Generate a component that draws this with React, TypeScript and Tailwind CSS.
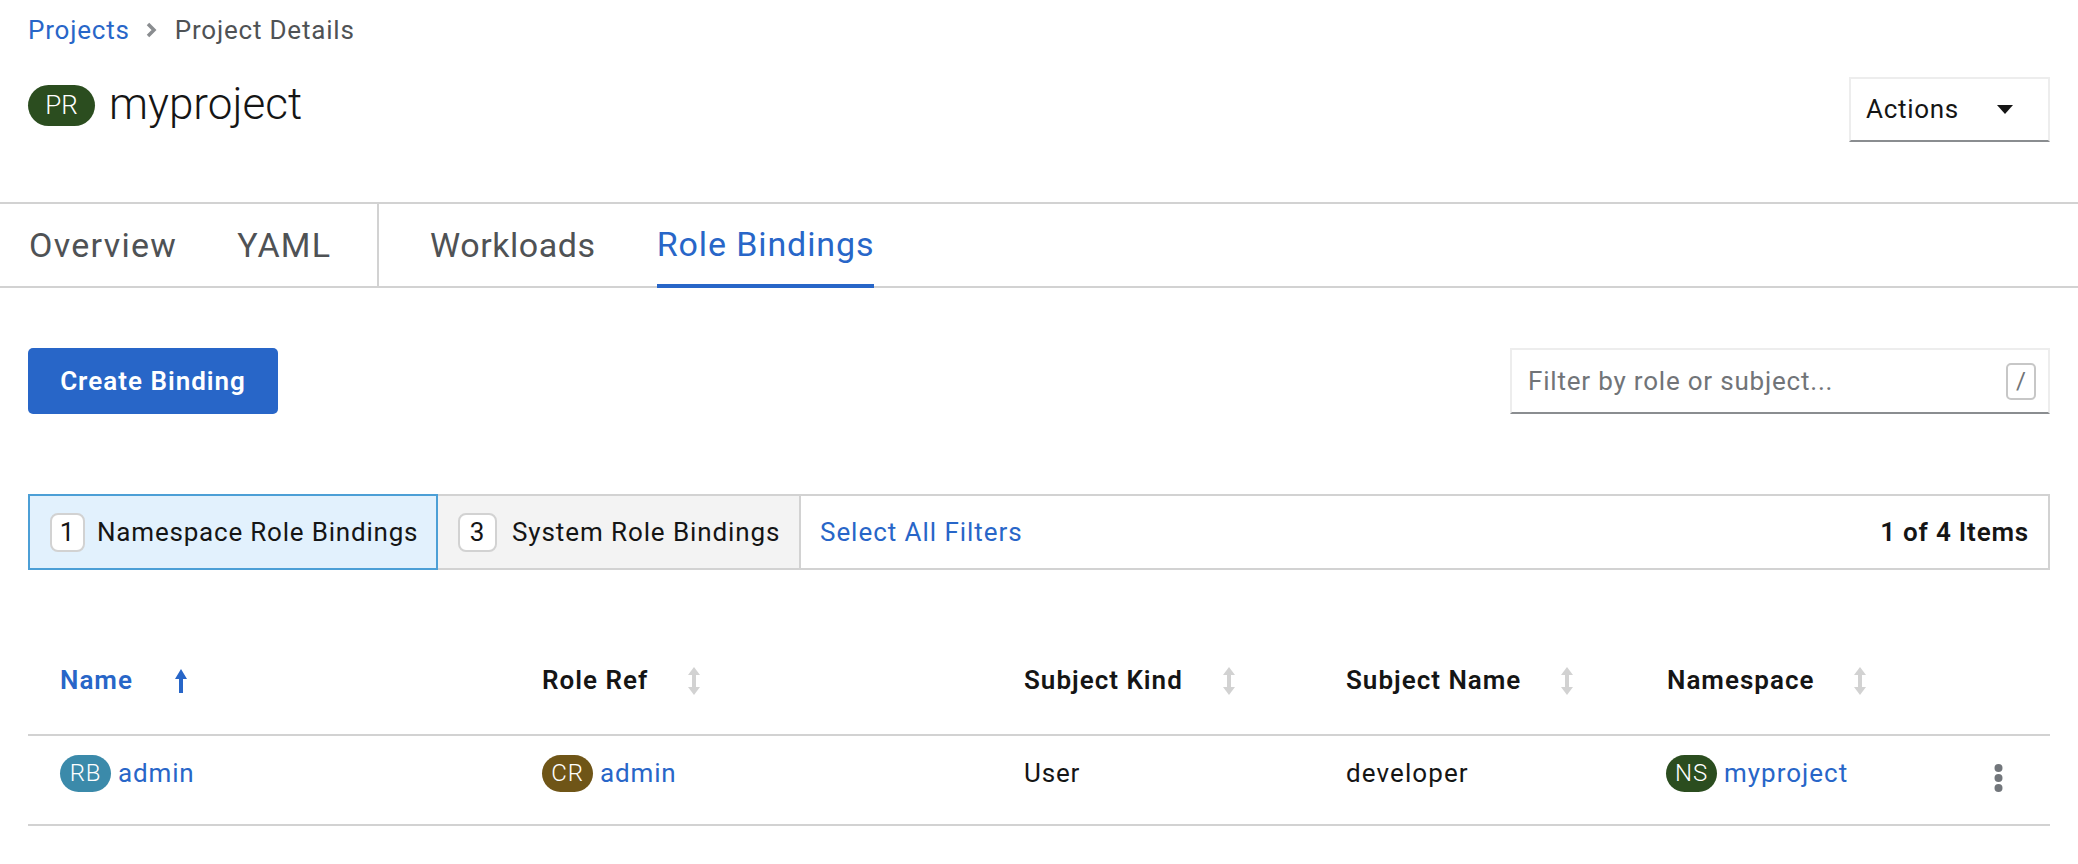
import React from "react";

const F = "font-['Roboto',sans-serif]";

function Badge({ t, w = "w-[51px]" }: { t: string; w?: string }) {
  return <span className={`${w} h-[37px] shrink-0 rounded-[19px] text-white text-[24px] flex items-center justify-center font-light`} style={{ background: t === "RB" ? "#3b8aaa" : t === "CR" ? "#6f5517" : "#2b4d1f" }}>{t}</span>;
}

function Sort({ active }: { active?: boolean }) {
  if (active)
    return (
      <svg width="14" height="26" viewBox="0 0 14 26" className="text-[#2866c8]" fill="currentColor">
        <path d="M7 1 13 11H9V25H5V11H1Z" />
      </svg>
    );
  return (
    <svg width="14" height="28" viewBox="0 0 14 28" fill="#d2d2d2">
      <path d="M7 0 13 8H9V20H13L7 28 1 20H5V8H1Z" />
    </svg>
  );
}

function Head({ label, active }: { label: string; active?: boolean }) {
  return (
    <div className={`pl-[32px] flex items-center font-semibold text-[26px] tracking-[1px] ${active ? "gap-[41px] text-[#2866c8]" : "gap-[39px] text-[#151515]"}`}>
      <span>{label}</span>
      <Sort active={active} />
    </div>
  );
}

export default function App() {
  return (
    <div className={`${F} w-[2078px] h-[864px] bg-white text-[#151515] overflow-hidden`}>
      <header className="h-[202px] px-[28px] flex flex-col">
        <nav className="flex items-center h-[30px] mt-[15px] text-[26px] tracking-[0.8px] text-[#4f5255]">
          <span className="text-[#2866c8]">Projects</span>
          <svg width="12" height="16" viewBox="0 0 12 16" className="ml-[15px] mr-[18px]" fill="none" stroke="#8a8d90" strokeWidth="3.5">
            <path d="M3 2 9 8 3 14" />
          </svg>
          <span>Project Details</span>
        </nav>
        <div className="flex items-start justify-between mt-[32px]">
          <div className="flex items-center gap-[14px] mt-[8px]">
            <span className="w-[67px] h-[41px] rounded-[21px] bg-[#2b4d1f] text-white text-[26px] font-light flex items-center justify-center">PR</span>
            <h1 className="text-[44px] font-light leading-[41px] -mt-[2px]">myproject</h1>
          </div>
          <button className="w-[201px] h-[65px] border-2 border-[#ededed] border-b-[#8a8d90] flex items-center pl-[15px] text-[26px] tracking-[0.7px]">
            <span>Actions</span>
            <svg width="16" height="9" viewBox="0 0 16 9" className="ml-[38px]" fill="#151515">
              <path d="M0 0H16L8 9Z" />
            </svg>
          </button>
        </div>
      </header>

      <nav className="h-[86px] border-y-2 border-[#d2d2d2] flex items-stretch text-[34px] text-[#4f5255]">
        <div className="w-[379px] pl-[29px] border-r-2 border-[#d2d2d2] flex items-center gap-[60px] tracking-[1.3px]">
          <span>Overview</span>
          <span>YAML</span>
        </div>
        <div className="pl-[51px] flex items-stretch gap-[61px]">
          <span className="flex items-center tracking-[0.55px]">Workloads</span>
          <span className="flex items-center tracking-[0.9px] text-[#2866c8] border-b-4 border-[#2866c8] -mb-[2px]">Role Bindings</span>
        </div>
      </nav>

      <main className="px-[28px]">
        <div className="flex justify-between mt-[60px]">
          <button className="w-[250px] h-[66px] rounded-[5px] bg-[#2866c8] text-white text-[26px] font-semibold tracking-[1px]">Create Binding</button>
          <div className="w-[540px] h-[66px] border-2 border-[#ededed] border-b-[#8a8d90] flex items-center justify-between pl-[16px] pr-[12px]">
            <span className="text-[26px] tracking-[0.8px] text-[#717478]">Filter by role or subject...</span>
            <span className="w-[30px] h-[37px] rounded-[5px] border-2 border-[#c7c7c7] text-[#717478] text-[24px] flex items-center justify-center">/</span>
          </div>
        </div>

        <div className="mt-[80px] h-[76px] border-2 border-[#d2d2d2] flex items-stretch text-[26px] tracking-[0.8px]">
          <div className="w-[410px] -my-[2px] -ml-[2px] border-2 border-[#4c9fd6] bg-[#e2f1fd] flex items-center pl-[20px]">
            <span className="w-[35px] h-[39px] mr-[12px] rounded-[8px] border-2 border-[#d2d2d2] bg-white flex items-center justify-center">1</span>
            <span>Namespace Role Bindings</span>
          </div>
          <div className="w-[363px] bg-[#f3f3f3] border-r-2 border-[#d2d2d2] flex items-center pl-[20px]">
            <span className="w-[39px] h-[39px] mr-[15px] rounded-[8px] border-2 border-[#d2d2d2] bg-white flex items-center justify-center">3</span>
            <span className="tracking-[0.9px]">System Role Bindings</span>
          </div>
          <span className="ml-[19px] flex items-center tracking-[0.95px] text-[#2866c8]">Select All Filters</span>
          <span className="ml-auto mr-[19px] flex items-center font-semibold">1 of 4 Items</span>
        </div>

        <div className="mt-[79px]">
          <div className="grid grid-cols-[482px_482px_322px_321px_1fr] h-[87px] pb-[22px] items-center border-b-2 border-[#d2d2d2]">
            <Head label="Name" active />
            <Head label="Role Ref" />
            <Head label="Subject Kind" />
            <Head label="Subject Name" />
            <Head label="Namespace" />
          </div>
          <div className="grid grid-cols-[482px_482px_322px_321px_1fr] h-[90px] pb-[14px] items-center border-b-2 border-[#d2d2d2] text-[26px] tracking-[0.85px]">
            <div className="pl-[32px] flex items-center gap-[7px]"><Badge t="RB" /><span className="text-[#2866c8]">admin</span></div>
            <div className="pl-[32px] flex items-center gap-[7px]"><Badge t="CR" /><span className="text-[#2866c8]">admin</span></div>
            <div className="pl-[32px]">User</div>
            <div className="pl-[32px] tracking-[1.1px]">developer</div>
            <div className="pl-[31px] pr-[47px] flex items-center gap-[7px]">
              <Badge t="NS" />
              <span className="text-[#2866c8] tracking-[1px]">myproject</span>
              <svg width="9" height="28" viewBox="0 0 9 28" fill="#72767b" className="ml-auto mt-[10px]">
                <circle cx="4.5" cy="4" r="4" /><circle cx="4.5" cy="14" r="4" /><circle cx="4.5" cy="24" r="4" />
              </svg>
            </div>
          </div>
        </div>
      </main>
    </div>
  );
}
